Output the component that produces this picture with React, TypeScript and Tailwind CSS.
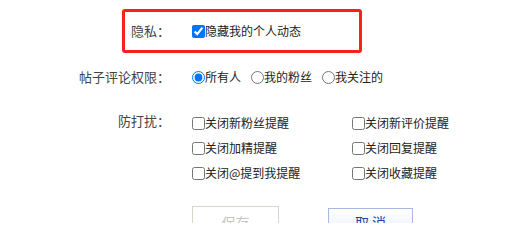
import { useState } from 'react'

const font = { fontFamily: '"Noto Sans CJK SC", "Noto Sans", sans-serif' }

// 防打扰 options, two columns
const quietOptions = [
  { id: 'fans', label: '关闭新粉丝提醒' },
  { id: 'review', label: '关闭新评价提醒' },
  { id: 'digest', label: '关闭加精提醒' },
  { id: 'reply', label: '关闭回复提醒' },
  { id: 'mention', label: '关闭@提到我提醒' },
  { id: 'fav', label: '关闭收藏提醒' },
]

const permissions = [
  { id: 'all', label: '所有人' },
  { id: 'fans', label: '我的粉丝' },
  { id: 'follow', label: '我关注的' },
]

export default function App() {
  const [hideActivity, setHideActivity] = useState(true)
  const [perm, setPerm] = useState('all')
  const [quiet, setQuiet] = useState<Record<string, boolean>>({})

  return (
    <div
      className="w-[523px] h-[223px] overflow-hidden bg-white pt-[9px] text-[#333]"
      style={font}
    >
      {/* Privacy row, highlighted */}
      <div className="ml-[122px] w-[240px] h-[44px] border-[3px] border-[#f6231c] rounded-[3px] flex items-center">
        <div className="w-[45px] text-right text-[13px] leading-[20px] text-[#444]">隐私：</div>
        <label className="ml-[22px] flex items-center text-[12px] leading-[20px] text-[#222]">
          <input
            type="checkbox"
            className="m-0 w-[13px] h-[13px]"
            checked={hideActivity}
            onChange={(e) => setHideActivity(e.target.checked)}
          />
          隐藏我的个人动态
        </label>
      </div>

      {/* Post comment permission */}
      <div className="mt-[14px] flex items-center h-[20px]">
        <div className="w-[170px] text-right text-[13px] leading-[20px] text-[#444]">帖子评论权限：</div>
        <div className="ml-[22px] flex items-center text-[12px] leading-[20px] text-[#222]">
          {permissions.map((p, i) => (
            <label key={p.id} className={`flex items-center ${i > 0 ? 'ml-[10px]' : ''}`}>
              <input
                type="radio"
                name="perm"
                className="m-0 w-[13px] h-[13px]"
                checked={perm === p.id}
                onChange={() => setPerm(p.id)}
              />
              {p.label}
            </label>
          ))}
        </div>
      </div>

      {/* Do not disturb */}
      <div className="mt-[26px] flex">
        <div className="w-[170px] text-right text-[13px] leading-[20px] text-[#444] -mt-[2px]">防打扰：</div>
        <div className="ml-[22px] grid grid-cols-[160px_160px] gap-y-[5px] text-[12px] leading-[20px] text-[#222]">
          {quietOptions.map((o) => (
            <label key={o.id} className="flex items-center h-[20px]">
              <input
                type="checkbox"
                className="m-0 w-[13px] h-[13px]"
                checked={!!quiet[o.id]}
                onChange={(e) => setQuiet({ ...quiet, [o.id]: e.target.checked })}
              />
              {o.label}
            </label>
          ))}
        </div>
      </div>

      {/* Buttons */}
      <div className="mt-[23px] ml-[192px] flex items-start">
        <button className="w-[87px] h-[32px] border border-[#d3d8cc] bg-white text-[14px] text-[#c3c6bd]" disabled>
          保存
        </button>
        <button className="ml-[49px] mt-[2px] w-[85px] h-[28px] border border-[#a7b9de] bg-gradient-to-b from-white to-[#e9eff9] text-[14px] text-[#1c44a6]">
          取 消
        </button>
      </div>
    </div>
  )
}
